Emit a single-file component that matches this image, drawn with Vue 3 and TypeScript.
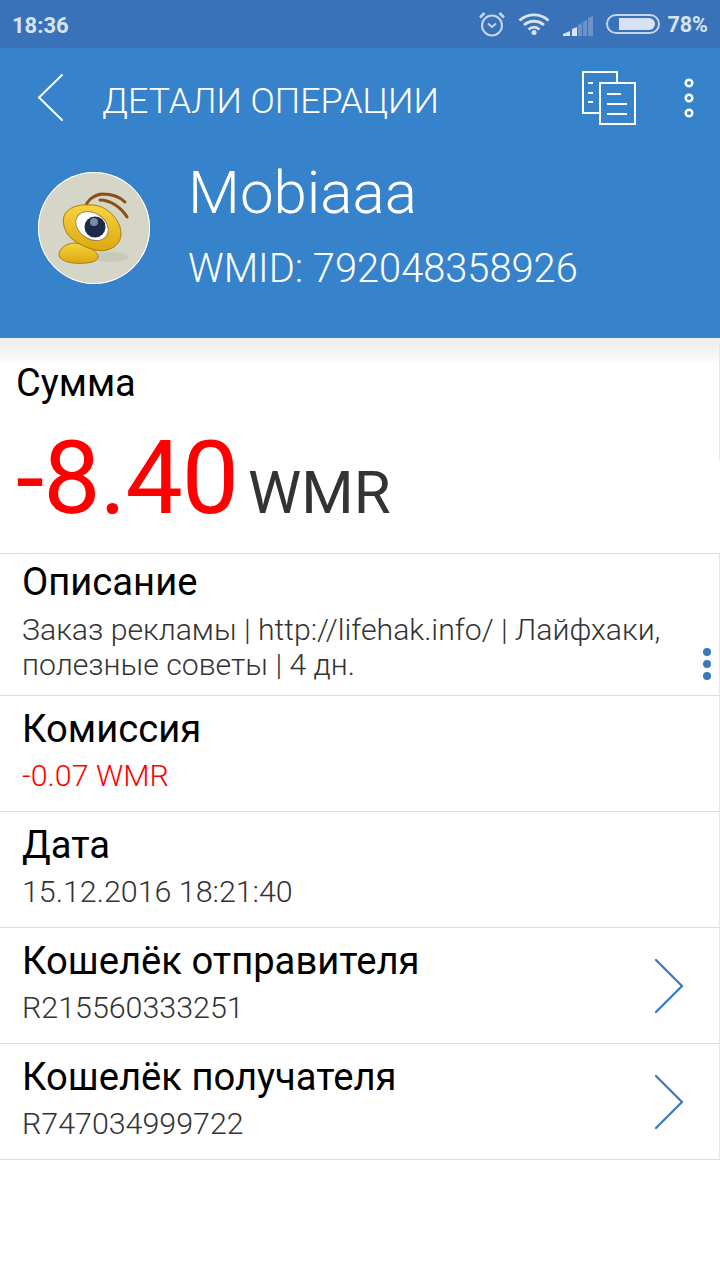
<script setup lang="ts">
const rows = [
  { title: 'Комиссия', value: '-0.07 WMR', red: true, arrow: false },
  { title: 'Дата', value: '15.12.2016 18:21:40', red: false, arrow: false },
  { title: 'Кошелёк отправителя', value: 'R215560333251', red: false, arrow: true },
  { title: 'Кошелёк получателя', value: 'R747034999722', red: false, arrow: true },
];
</script>

<template>
  <div class="screen">
    <div class="status">
      <span class="clock">18:36</span>
      <div class="status-right">
        <svg class="alarm" width="30" height="28" viewBox="0 0 30 28" fill="none" stroke="#c4d5ec" stroke-width="2">
          <circle cx="15" cy="15.500" r="10" />
          <path d="M11 13.500 15 17l4-3.500" />
          <path d="M3 7.500 7.500 3M27 7.500 22.500 3" stroke-width="2.500" />
        </svg>
        <svg class="wifi" width="32" height="24" viewBox="0 0 32 24" fill="none" stroke="#d8e3f2" stroke-width="2.800">
          <path d="M1.500 8.500C10 1 22 1 30.500 8.500" />
          <path d="M6 13C12 8 20 8 26 13" />
          <path d="M10.500 17.500C14 14.500 18 14.500 21.500 17.500" />
          <circle cx="16" cy="20.500" r="2.500" fill="#d8e3f2" stroke="none" />
        </svg>
        <svg class="signal" width="31" height="22" viewBox="0 0 31 22">
          <path d="M0 21v-2l7-3v5z" fill="#d8e3f2" />
          <path d="M9 21v-7l5-2v9z" fill="#d8e3f2" />
          <path d="M15 21V10l4-2v13z" fill="#6d93c6" />
          <path d="M20 21V7l4-2v16z" fill="#6d93c6" />
          <path d="M25 21V3l5-2v20z" fill="#6d93c6" />
        </svg>
        <div class="battery"><div class="battery-fill"></div></div>
        <span class="percent">78%</span>
      </div>
    </div>

    <header class="header">
      <div class="toolbar">
        <svg class="back" width="28" height="50" viewBox="0 0 28 50" fill="none" stroke="#fff" stroke-width="2" stroke-linecap="round">
          <path d="M26 2 3 24.500l23 22.500" />
        </svg>
        <span class="toolbar-title">ДЕТАЛИ ОПЕРАЦИИ</span>
        <svg class="docs" width="56" height="54" viewBox="0 0 56 54" fill="none" stroke="#fff" stroke-width="2">
          <path d="M17 42H1V1h34v10" />
          <rect x="18" y="12" width="35" height="41" />
          <path d="M6 12h5M6 22h5M6 31h5M25 23h14M25 33h20M25 43h20" />
        </svg>
        <svg class="more" width="14" height="42" viewBox="0 0 14 42" fill="none" stroke="#fff" stroke-width="2.500">
          <circle cx="7" cy="6" r="3.300" />
          <circle cx="7" cy="21" r="3.300" />
          <circle cx="7" cy="36" r="3.300" />
        </svg>
      </div>
      <div class="profile">
        <div class="avatar">
          <svg width="112" height="112" viewBox="0 0 112 112">
            <defs>
              <linearGradient id="body" x1="0" y1="0" x2="0" y2="1">
                <stop offset="0" stop-color="#f8d43f" />
                <stop offset="1" stop-color="#dca70f" />
              </linearGradient>
            </defs>
            <ellipse cx="72" cy="85" rx="18" ry="5" fill="#c8c9ba" />
            <path d="M47 36C49 28 56 23 64 22C73 22 82 25 87 30" fill="none" stroke="#8a5018" stroke-width="3" stroke-linecap="round" />
            <path d="M62 28C72 28 83 35 89 45" fill="none" stroke="#8a5018" stroke-width="3" stroke-linecap="round" />
            <path d="M35 71C45 71 60 78 60 85C60 91 45 92 35 91C26 90 20 86 21 82C22 76 28 72 35 71Z" fill="url(#body)" stroke="#a67f14" />
            <path d="M50 33C66 31 83 46 83 62C83 75 68 81 57 78C49 76 40 72 34 67C27 61 24 52 26 44C29 36 40 32 50 33Z" fill="url(#body)" stroke="#a67f14" />
            <ellipse cx="54" cy="54" rx="17.500" ry="13" transform="rotate(34 54 54)" fill="#fff" stroke="#9c8a4c" />
            <circle cx="57" cy="55" r="10.500" fill="#1e2a4b" />
            <circle cx="56" cy="50" r="4" fill="#7c89a8" />
          </svg>
        </div>
        <div class="who">
          <div class="name">Mobiaaa</div>
          <div class="wmid">WMID: 792048358926</div>
        </div>
      </div>
    </header>

    <section class="sum">
      <div class="sum-title">Сумма</div>
      <div class="sum-line">
        <span class="amount">-8.40</span>
        <span class="currency">WMR</span>
      </div>
    </section>

    <div class="row desc">
      <div class="row-title">Описание</div>
      <div class="row-value">Заказ рекламы | http://lifehak.info/ | Лайфхаки, полезные советы | 4 дн.</div>
      <div class="dots"><i></i><i></i><i></i></div>
    </div>

    <div v-for="row in rows" :key="row.title" class="row">
      <div class="row-title">{{ row.title }}</div>
      <div class="row-value" :class="{ red: row.red }">{{ row.value }}</div>
      <svg v-if="row.arrow" class="chevron" width="30" height="56" viewBox="0 0 30 56" fill="none" stroke="#3a78bb" stroke-width="2.200" stroke-linecap="round">
        <path d="M2 2l26 26L2 54" />
      </svg>
    </div>
  </div>
</template>

<style scoped>
.screen {
  width: 720px;
  height: 1280px;
  background: #fff;
  font-family: Roboto, "Noto Sans", sans-serif;
  overflow: hidden;
}
.status {
  height: 48px;
  background: #3a72b9;
  display: flex;
  align-items: center;
  justify-content: space-between;
  padding: 0 12px 0 12px;
  color: #d8e3f2;
}
.clock {
  font-size: 22px;
  font-weight: 700;
  padding-top: 2px;
}
.status-right {
  display: flex;
  align-items: center;
}
.alarm {
  margin-right: 11px;
}
.wifi {
  margin-right: 13px;
}
.signal {
  margin-right: 12px;
  margin-top: 3px;
}
.battery {
  box-sizing: border-box;
  width: 54px;
  height: 20px;
  border: 2px solid #c4d5ec;
  border-radius: 10px;
  padding: 2px 3px 2px 11px;
  margin-right: 7px;
}
.battery-fill {
  height: 100%;
  background: #d8e3f2;
  border-radius: 0 6px 6px 0;
}
.percent {
  font-size: 21.500px;
  font-weight: 700;
}
.header {
  position: relative;
  height: 290px;
  background: #3783cb;
  box-shadow: 0 4px 2px rgba(0, 0, 0, 0.22);
}
.toolbar {
  display: flex;
  align-items: center;
  height: 100px;
  padding-left: 36px;
}
.back {
  margin-right: 38px;
}
.toolbar-title {
  flex: 1;
  color: #fff;
  font-size: 35.800px;
  font-weight: 300;
  padding-top: 6px;
}
.docs {
  margin-right: 44px;
}
.more {
  margin-right: 24px;
}
.profile {
  display: flex;
  align-items: center;
  padding-left: 38px;
  margin-top: 10px;
}
.avatar {
  width: 112px;
  height: 112px;
  border-radius: 50%;
  background: #d5d6c8;
  box-shadow: 0 0 0 1px #fff inset;
  overflow: hidden;
  margin-right: 38px;
}
.who {
  margin-bottom: 4px;
}
.name {
  color: #fff;
  font-size: 60px;
  font-weight: 300;
  line-height: 70px;
}
.wmid {
  color: #fff;
  font-size: 39.800px;
  font-weight: 300;
  line-height: 50px;
  margin-top: 16px;
}
.sum {
  position: relative;
  height: 216px;
  border-bottom: 1px solid #dcdcdc;
  box-sizing: border-box;
  padding: 23px 0 0 16px;
  background: linear-gradient(#eeeeee 5px, #fff 28px);
}
.sum::after {
  content: "";
  position: absolute;
  right: 0;
  top: 7px;
  width: 1px;
  height: 115px;
  background: #e6e6e6;
}
.sum-title {
  font-size: 38px;
  line-height: 44px;
  color: #000;
}
.sum-line {
  display: flex;
  align-items: baseline;
  margin-top: 11px;
}
.amount {
  font-size: 102px;
  letter-spacing: -1px;
  line-height: 124px;
  color: #f00;
}
.currency {
  font-size: 60px;
  color: #333;
  margin-left: 10px;
}
.row {
  position: relative;
  box-sizing: border-box;
  height: 116px;
  padding: 13px 0 0 22px;
  border-bottom: 1px solid #dcdcdc;
  border-right: 1px solid #e6e6e6;
}
.desc {
  height: 142px;
  padding-top: 8px;
}
.row-title {
  font-size: 38.200px;
  line-height: 40px;
  color: #000;
}
.row-value {
  font-size: 30.400px;
  font-weight: 300;
  line-height: 40px;
  color: #333;
  margin-top: 7px;
  width: 660px;
}
.desc .row-value {
  font-size: 30.200px;
  line-height: 35px;
  margin-top: 10px;
}
.red {
  color: #f00;
}
.dots {
  position: absolute;
  right: 8px;
  top: 94px;
  display: flex;
  flex-direction: column;
  gap: 4px;
}
.dots i {
  width: 8px;
  height: 8px;
  border-radius: 50%;
  background: #3a78bb;
}
.chevron {
  position: absolute;
  right: 35px;
  top: 30px;
}
</style>
